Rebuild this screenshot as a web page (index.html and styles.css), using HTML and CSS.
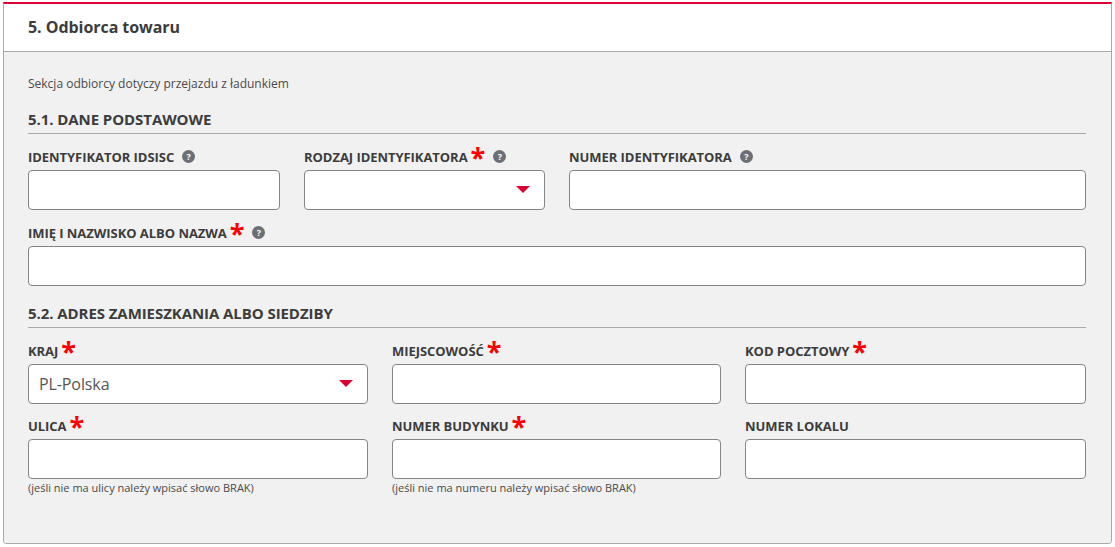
FILE: index.html
```html
<!doctype html>
<html lang="pl">

<head>
    <meta charset="UTF-8" />
    <meta name="viewport" content="width=device-width, initial-scale=1.0" />
    <title>Odbiorca towaru</title>
    <link rel="stylesheet" href="styles.css">
</head>

<body>
    <section class="panel">
        <h2 class="panel-title">5. Odbiorca towaru</h2>
        <div class="panel-body">
            <p class="note">Sekcja odbiorcy dotyczy przejazdu z ładunkiem</p>

            <h3 class="subtitle">5.1. DANE PODSTAWOWE</h3>
            <div class="row row-basic">
                <div class="field">
                    <label class="label">IDENTYFIKATOR IDSISC<span class="help">?</span></label>
                    <input class="input" type="text">
                </div>
                <div class="field">
                    <label class="label">RODZAJ IDENTYFIKATORA<span class="req">*</span><span class="help">?</span></label>
                    <div class="select"></div>
                </div>
                <div class="field">
                    <label class="label">NUMER IDENTYFIKATORA<span class="help">?</span></label>
                    <input class="input" type="text">
                </div>
            </div>
            <div class="row row-full">
                <div class="field">
                    <label class="label">IMIĘ I NAZWISKO ALBO NAZWA<span class="req">*</span><span class="help">?</span></label>
                    <input class="input" type="text">
                </div>
            </div>

            <h3 class="subtitle subtitle-address">5.2. ADRES ZAMIESZKANIA ALBO SIEDZIBY</h3>
            <div class="row row-address">
                <div class="field">
                    <label class="label">KRAJ<span class="req">*</span></label>
                    <div class="select">PL-Polska</div>
                </div>
                <div class="field">
                    <label class="label">MIEJSCOWOŚĆ<span class="req">*</span></label>
                    <input class="input" type="text">
                </div>
                <div class="field">
                    <label class="label">KOD POCZTOWY<span class="req">*</span></label>
                    <input class="input" type="text">
                </div>
            </div>
            <div class="row row-address">
                <div class="field">
                    <label class="label">ULICA<span class="req">*</span></label>
                    <input class="input" type="text">
                    <small class="hint">(jeśli nie ma ulicy należy wpisać słowo BRAK)</small>
                </div>
                <div class="field">
                    <label class="label">NUMER BUDYNKU<span class="req">*</span></label>
                    <input class="input" type="text">
                    <small class="hint">(jeśli nie ma numeru należy wpisać słowo BRAK)</small>
                </div>
                <div class="field">
                    <label class="label">NUMER LOKALU</label>
                    <input class="input" type="text">
                </div>
            </div>
        </div>
    </section>
</body>

</html>
```

FILE: styles.css
```css
* {
    box-sizing: border-box;
}

body {
    margin: 0;
    background: #fff;
    color: #3c3c3c;
    font-family: "Open Sans", sans-serif;
}

.panel {
    width: 1109px;
    height: 542px;
    margin: 2px 0 0 3px;
    display: flex;
    flex-direction: column;
    border: 1px solid #a9a9a9;
    border-top: 2px solid #dc0032;
    border-radius: 0 0 4px 4px;
    overflow: hidden;
}

.panel-title {
    height: 48px;
    margin: 0;
    padding: 0 24px 2px;
    display: flex;
    align-items: center;
    background: #fff;
    border-bottom: 1px solid #a9a9a9;
    font-size: 16px;
    font-weight: 700;
    letter-spacing: -0.05px;
    color: #3c3c3c;
}

.panel-body {
    flex: 1;
    padding: 23px 24px 0 24px;
    background: #f1f1f1;
}

.note {
    height: 17px;
    margin: 0;
    font-size: 12px;
    line-height: 17px;
    color: #4a4a4a;
}

.subtitle {
    width: 1058px;
    height: 25px;
    margin: 17px 0 0;
    border-bottom: 1px solid #a9a9a9;
    font-size: 15px;
    line-height: 21px;
    font-weight: 700;
    letter-spacing: -0.07px;
    color: #3c3c3c;
}

.row {
    display: grid;
    width: 1058px;
    column-gap: 24px;
}

.row-basic {
    margin-top: 13px;
    grid-template-columns: 252px 241px 517px;
}

.row-full {
    margin-top: 13px;
    grid-template-columns: 1fr;
}

.row-address {
    margin-top: 12px;
    grid-template-columns: 340px 329px 341px;
}

.subtitle + .row-address {
    margin-top: 13px;
}

.label {
    height: 21px;
    padding-bottom: 2px;
    display: flex;
    align-items: center;
    white-space: nowrap;
    font-size: 13px;
    font-weight: 700;
    letter-spacing: -0.05px;
    color: #3c3c3c;
}

.req {
    margin-left: 3px;
    height: 21px;
    font-size: 27px;
    line-height: 21px;
    font-weight: 700;
    color: #f00;
}

.help {
    width: 13px;
    height: 13px;
    margin-left: 8px;
    display: flex;
    align-items: center;
    justify-content: center;
    border-radius: 50%;
    background: #6b6f76;
    color: #fff;
    font-size: 9px;
    font-weight: 700;
}

.input,
.select {
    display: block;
    width: 100%;
    height: 40px;
    margin-top: 2px;
    padding: 0 10px;
    border: 1px solid #858585;
    border-radius: 4px;
    background: #fff;
}

.select {
    position: relative;
    font-size: 16px;
    line-height: 38px;
    letter-spacing: -0.1px;
    color: #555;
}

.select::after {
    content: "";
    position: absolute;
    top: 15px;
    right: 14px;
    border-left: 7px solid transparent;
    border-right: 7px solid transparent;
    border-top: 7px solid #dc0032;
}

.hint {
    display: block;
    margin-top: 1px;
    font-size: 11px;
    line-height: 15px;
    color: #4a4a4a;
}
```
